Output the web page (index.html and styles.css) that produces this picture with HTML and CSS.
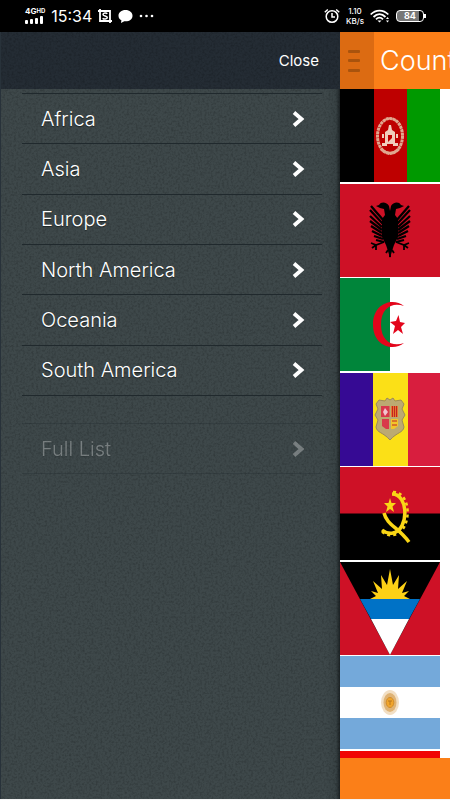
FILE: index.html
```html
<!DOCTYPE html>
<html lang="en">
<head>
<meta charset="utf-8">
<meta name="viewport" content="width=device-width, initial-scale=1">
<title>Countries</title>
<link rel="stylesheet" href="styles.css">
</head>
<body>
<svg class="defs" aria-hidden="true">
  <defs>
    <filter id="grain" x="0" y="0" width="100%" height="100%">
      <feTurbulence type="fractalNoise" baseFrequency="0.45" numOctaves="2" seed="4" stitchTiles="stitch"/>
      <feColorMatrix values="0 0 0 0 0  0 0 0 0 0  0 0 0 0 0  1.2 0 0 0 -0.5"/>
    </filter>
    <symbol id="chevron" viewBox="0 0 12 16"><path d="M1.500 1.500L9 8l-7.500 6.500" fill="none" stroke="currentColor" stroke-width="3.800"/></symbol>
  </defs>
</svg>

<div class="status">
  <div class="status-side">
    <div class="signal">
      <span class="network">4G<small>HD</small></span>
      <svg width="18" height="8" viewBox="0 0 18 8" fill="#fff"><rect y="4" width="3" height="4" rx="1"/><rect x="5" y="3" width="3" height="5" rx="1"/><rect x="10" y="2" width="3" height="6" rx="1"/><rect x="15" width="3" height="8" rx="1"/></svg>
    </div>
    <time class="clock">15:34</time>
    <svg class="shot" width="14" height="14" viewBox="0 0 14 14"><path d="M0 2h12v12M2 0v12h12" fill="none" stroke="#fff" stroke-width="1.800"/><path d="M9.300 4.700C8.500 3.600 5 3.600 5 5.400S9.300 6.800 9.300 8.600 5.600 10.500 4.700 9.200" fill="none" stroke="#fff" stroke-width="1.500"/></svg>
    <svg class="chat" width="15" height="13" viewBox="0 0 15 13"><path d="M7.500 0C3.400 0 .5 2.500.5 5.700c0 2 1.100 3.600 2.900 4.600L3 13l3.300-1.800c5 .5 8.200-2 8.200-5.500C14.500 2.500 11.600 0 7.500 0z" fill="#fff"/></svg>
    <svg width="15" height="4" viewBox="0 0 15 4" fill="#fff"><circle cx="2" cy="2" r="1.300"/><circle cx="7.500" cy="2" r="1.300"/><circle cx="13" cy="2" r="1.300"/></svg>
  </div>
  <div class="status-side">
    <svg width="16" height="16" viewBox="0 0 16 16" fill="none" stroke="#fff" stroke-width="1.500"><circle cx="8" cy="8.500" r="5.800"/><path d="M8 5v4h3M.8 4.200l3-2.700M15.200 4.200l-3-2.700"/></svg>
    <div class="speed"><span>1.10</span><span>KB/s</span></div>
    <svg class="wifi" width="20" height="14" viewBox="0 0 20 14" fill="none" stroke="#fff" stroke-width="1.800"><path d="M.7 5.500c5-5.300 12.600-5.300 17.600 0M3.500 8c3.700-3.700 8.300-3.700 12 0M6 10.400c2.200-2.200 4.800-2.200 7 0"/><path d="M7.500 11.500h4l-2 2z" fill="#fff" stroke="none"/><path d="M16 10l1.500-2L19 10zM16 11.500l1.500 2 1.500-2z" fill="#fff" stroke="none"/></svg>
    <div class="battery">84</div>
  </div>
</div>

<div class="app">
  <nav class="drawer" aria-label="Regions">
    <svg class="grain" aria-hidden="true"><rect width="100%" height="100%" filter="url(#grain)"/></svg>
    <header class="drawer-head"><button class="close" type="button">Close</button></header>
    <ul class="regions">
      <li><a href="#africa">Africa<svg class="chevron"><use href="#chevron"/></svg></a></li>
      <li><a href="#asia">Asia<svg class="chevron"><use href="#chevron"/></svg></a></li>
      <li><a href="#europe">Europe<svg class="chevron"><use href="#chevron"/></svg></a></li>
      <li><a href="#north-america">North America<svg class="chevron"><use href="#chevron"/></svg></a></li>
      <li><a href="#oceania">Oceania<svg class="chevron"><use href="#chevron"/></svg></a></li>
      <li><a href="#south-america">South America<svg class="chevron"><use href="#chevron"/></svg></a></li>
    </ul>
    <ul class="regions full">
      <li><a href="#all">Full List<svg class="chevron"><use href="#chevron"/></svg></a></li>
    </ul>
  </nav>

  <main class="page">
    <header class="page-head">
      <button class="menu" type="button" aria-label="Menu"><svg width="12" height="22" viewBox="0 0 12 22" fill="#a9530d"><rect width="12" height="3" rx="1"/><rect y="9" width="12" height="3" rx="1"/><rect y="19" width="12" height="3" rx="1"/></svg></button>
      <h1>Countries</h1>
    </header>
    <ul class="flags">
      <li><svg class="flag" viewBox="0 0 100 93" preserveAspectRatio="none">
        <path d="M0 0h34v93H0z"/><path d="M34 0h33v93H34z" fill="#be0000"/><path d="M67 0h33v93H67z" fill="#090"/>
        <g fill="none" stroke="#e0a890"><ellipse cx="50" cy="47" rx="12.500" ry="17.500" stroke-width="3" stroke-dasharray="3 .5"/><path d="M43 32q7-5 14 0" stroke-width="1.500"/><path d="M41 60q9 8 18 0" stroke-width="2.500"/></g>
        <path d="M49 36h2l1 5 3 2v11h3v3H42v-3h3V43l3-2zM42 45h2v4h-2zM56 45h2v4h-2z" fill="#f0cdbc"/><path d="M48 46h4v3l-4 4zM47 55h6v2h-6z" fill="#be0000"/>
      </svg></li>
      <li><svg class="flag" viewBox="0 0 100 93" preserveAspectRatio="none">
        <path d="M0 0h100v93H0z" fill="#ce1126"/>
        <g id="eagle-half"><path d="M50 27l-1-5c-2-4-8-5-10-1l-3 1 4 2 4 1 1 6-3 4 0 18 4 8 2 6 2 7z"/><path d="M44 37L31 22M43 40L30 26M42 43L30 32M42 46L30 37M42 49L31 42M42 52L32 47M43 55L34 52M44 58L36 56" fill="none" stroke="#000" stroke-width="2.300"/><path d="M44 58l-8 3-5-2M36 61l-4 3M36 61l0 5M48 66l-2 3M50 64v9" fill="none" stroke="#000" stroke-width="1.800"/></g>
        <use href="#eagle-half" transform="matrix(-1 0 0 1 100 0)"/>
      </svg></li>
      <li><svg class="flag" viewBox="0 0 100 93" preserveAspectRatio="none">
        <path d="M0 0h100v93H0z" fill="#fff"/><path d="M0 0h50v93H0z" fill="#00853a"/>
        <path d="M64 28C53 19 33 25 33 46.500S53 74 64 65C53 69 41 64 41 46.500S53 24 64 28zM58.500 37l-2.500 6-6 1 5 4-2 8 5-4 5 4-2-7 4-4-5-1z" fill="#e3051b"/>
      </svg></li>
      <li><svg class="flag" viewBox="0 0 100 93" preserveAspectRatio="none">
        <path d="M0 0h33v93H0z" fill="#360a94"/><path d="M33 0h35v93H33z" fill="#fbe017"/><path d="M68 0h32v93H68z" fill="#d81e3e"/>
        <path d="M47 25l3 2 3-2 2 3 6-1 3 4-2 5 3 6-3 5 2 7c-1 6-7 5-14 13-7-8-13-7-14-13l2-7-3-5 3-6-2-5 3-4 6 1z" fill="#bcaa72" stroke="#9d8a58"/>
        <path d="M41 33h8.500v11H41zM42 46h7v10h-3l-4-3z" fill="#d8394b"/><path d="M51 33h7v11h-7z" fill="#e6782f"/><path d="M51 46h7v7l-4 3h-3z" fill="#f2c52b"/><path d="M45 35l3 4-3 4-2-4z" fill="#f3c4cf"/><path d="M52.500 33v11M54.500 33v11M56.500 33v11M52 48h5M52 52h5" stroke="#c32222"/>
      </svg></li>
      <li><svg class="flag" viewBox="0 0 100 93" preserveAspectRatio="none">
        <path d="M0 0h100v93H0z"/><path d="M0 0h100v46.500H0z" fill="#ce1126"/>
        <g fill="none" stroke="#f9d616"><path d="M52 27c17 0 17 36 1 39q-6 1-11-3" stroke-width="3.500"/><path d="M53 25c20 0 19 41 0 43q-6 1-12-4" stroke-width="2.500" stroke-dasharray="3 3"/><path d="M44 46c3 12 14 14 25 29" stroke-width="3.500"/></g>
        <path d="M50 31l-1.500 5H44l3.500 3.500L46 45l4-3 4 3-1.500-5.500L56 36h-4.500z" fill="#f9d616"/>
      </svg></li>
      <li><svg class="flag" viewBox="0 0 100 93" preserveAspectRatio="none">
        <path d="M0 0h100v93H0z" fill="#ce1126"/><path d="M0 0h100L50 93z"/><path d="M20 37h60L69 57H31z" fill="#0072c6"/><path d="M31 57h38L50 93z" fill="#fff"/>
        <path d="M30 37l6-3-5-5 7 2-5-12 9 8-1-14 6 10 3-16 3 16 6-10-1 14 9-8-5 12 7-2-5 5 6 3z" fill="#fcd116"/>
      </svg></li>
      <li><svg class="flag" viewBox="0 0 100 93" preserveAspectRatio="none">
        <path d="M0 0h100v93H0z" fill="#74a9da"/><path d="M0 31h100v31H0z" fill="#fff"/>
        <ellipse cx="50" cy="46.500" rx="9" ry="12.500" fill="#f2dfc4"/><ellipse cx="50" cy="46.500" rx="6.500" ry="9.500" fill="#dfb375"/><ellipse cx="50" cy="46.500" rx="3.800" ry="5" fill="#f1a52b" stroke="#d08c2a"/><path d="M48 45h4M50 45v4" stroke="#b8761f"/>
      </svg></li>
      <li class="flag-next"></li>
    </ul>
    <footer class="page-foot"></footer>
  </main>
</div>
</body>
</html>
```

FILE: styles.css
```css
* {
  box-sizing: border-box;
}

body {
  margin: 0;
  height: 100vh;
  display: flex;
  flex-direction: column;
  overflow: hidden;
  background: #f4f4f4;
  font-family: Inter, "Liberation Sans", sans-serif;
  font-weight: 300;
  color: #fff;
}

ul {
  list-style: none;
  margin: 0;
  padding: 0;
}

button {
  border: 0;
  padding: 0;
  background: none;
  color: inherit;
  font: inherit;
}

.defs {
  position: absolute;
  width: 0;
  height: 0;
}

.status {
  flex: none;
  height: 32px;
  padding: 0 26px 0 25px;
  display: flex;
  justify-content: space-between;
  background: #000;
}

.status-side {
  display: flex;
  align-items: center;
  gap: 6px;
}

.signal {
  display: flex;
  flex-direction: column;
  gap: 1px;
}

.network {
  font-size: 8px;
  line-height: 7px;
  font-weight: 700;
  display: flex;
}

.network small {
  font-size: 6px;
  line-height: 5px;
}

.clock {
  font-size: 16px;
  font-weight: 400;
}

.speed {
  display: flex;
  flex-direction: column;
  align-items: center;
  font-size: 8px;
  line-height: 10px;
  font-weight: 500;
}

.battery {
  position: relative;
  width: 28px;
  height: 12px;
  border: 1px solid #fff;
  border-radius: 4px;
  background: linear-gradient(to right, #777 84%, #000 84%);
  font-size: 9px;
  line-height: 10px;
  font-weight: 700;
  text-align: center;
}

.battery::after {
  content: "";
  position: absolute;
  right: -3px;
  top: 3px;
  width: 2px;
  height: 4px;
  background: #fff;
}

.app {
  flex: 1;
  min-height: 0;
  display: flex;
  margin-bottom: 1px;
}

.drawer {
  position: relative;
  flex: none;
  width: 340px;
  border-left: 1px solid #28323a;
  background: linear-gradient(to left, #1c2224, #384244 4px, #3e484a 14px);
}

.grain {
  position: absolute;
  inset: 0;
  width: 100%;
  height: 100%;
  opacity: 0.35;
}

.drawer-head {
  height: 57px;
  padding: 0 21px;
  display: flex;
  align-items: center;
  justify-content: flex-end;
  background: #242c34;
}

.close {
  position: relative;
  font-size: 15px;
  font-weight: 400;
}

.regions {
  position: relative;
  height: 303px;
  margin: 4px 18px 0 21px;
  display: grid;
  grid-auto-rows: 1fr;
  border-top: 1px solid #20292d;
}

.regions li {
  display: flex;
  border-bottom: 1px solid #20292d;
}

.regions a {
  flex: 1;
  padding: 0 17px 0 19px;
  display: flex;
  align-items: center;
  justify-content: space-between;
  color: #fff;
  font-size: 20px;
  text-decoration: none;
  text-shadow: 0 1px 1px #1b2224;
}

.chevron {
  width: 13px;
  height: 16px;
}

.full {
  height: 51px;
  margin-top: 27px;
  opacity: 0.3;
}

.page {
  flex: 1;
  min-width: 0;
  display: flex;
  flex-direction: column;
  background: #fff;
}

.page-head {
  flex: none;
  height: 57px;
  display: flex;
  align-items: center;
  background: #fb7f18;
  overflow: hidden;
}

.menu {
  flex: none;
  width: 34px;
  height: 100%;
  padding-right: 7px;
  display: flex;
  align-items: center;
  justify-content: center;
  background: #dc6b12;
}

.page-head h1 {
  margin: 0 0 0 6px;
  font-size: 27px;
  font-weight: 300;
}

.flags {
  flex: 1;
  min-height: 0;
  display: flex;
  flex-direction: column;
  justify-content: space-between;
}

.flag {
  display: block;
  width: 100px;
  height: 93px;
}

.flag-next {
  width: 100px;
  height: 7px;
  background: #f00505;
}

.page-foot {
  flex: none;
  height: 41px;
  background: #fb7f18;
}
```
